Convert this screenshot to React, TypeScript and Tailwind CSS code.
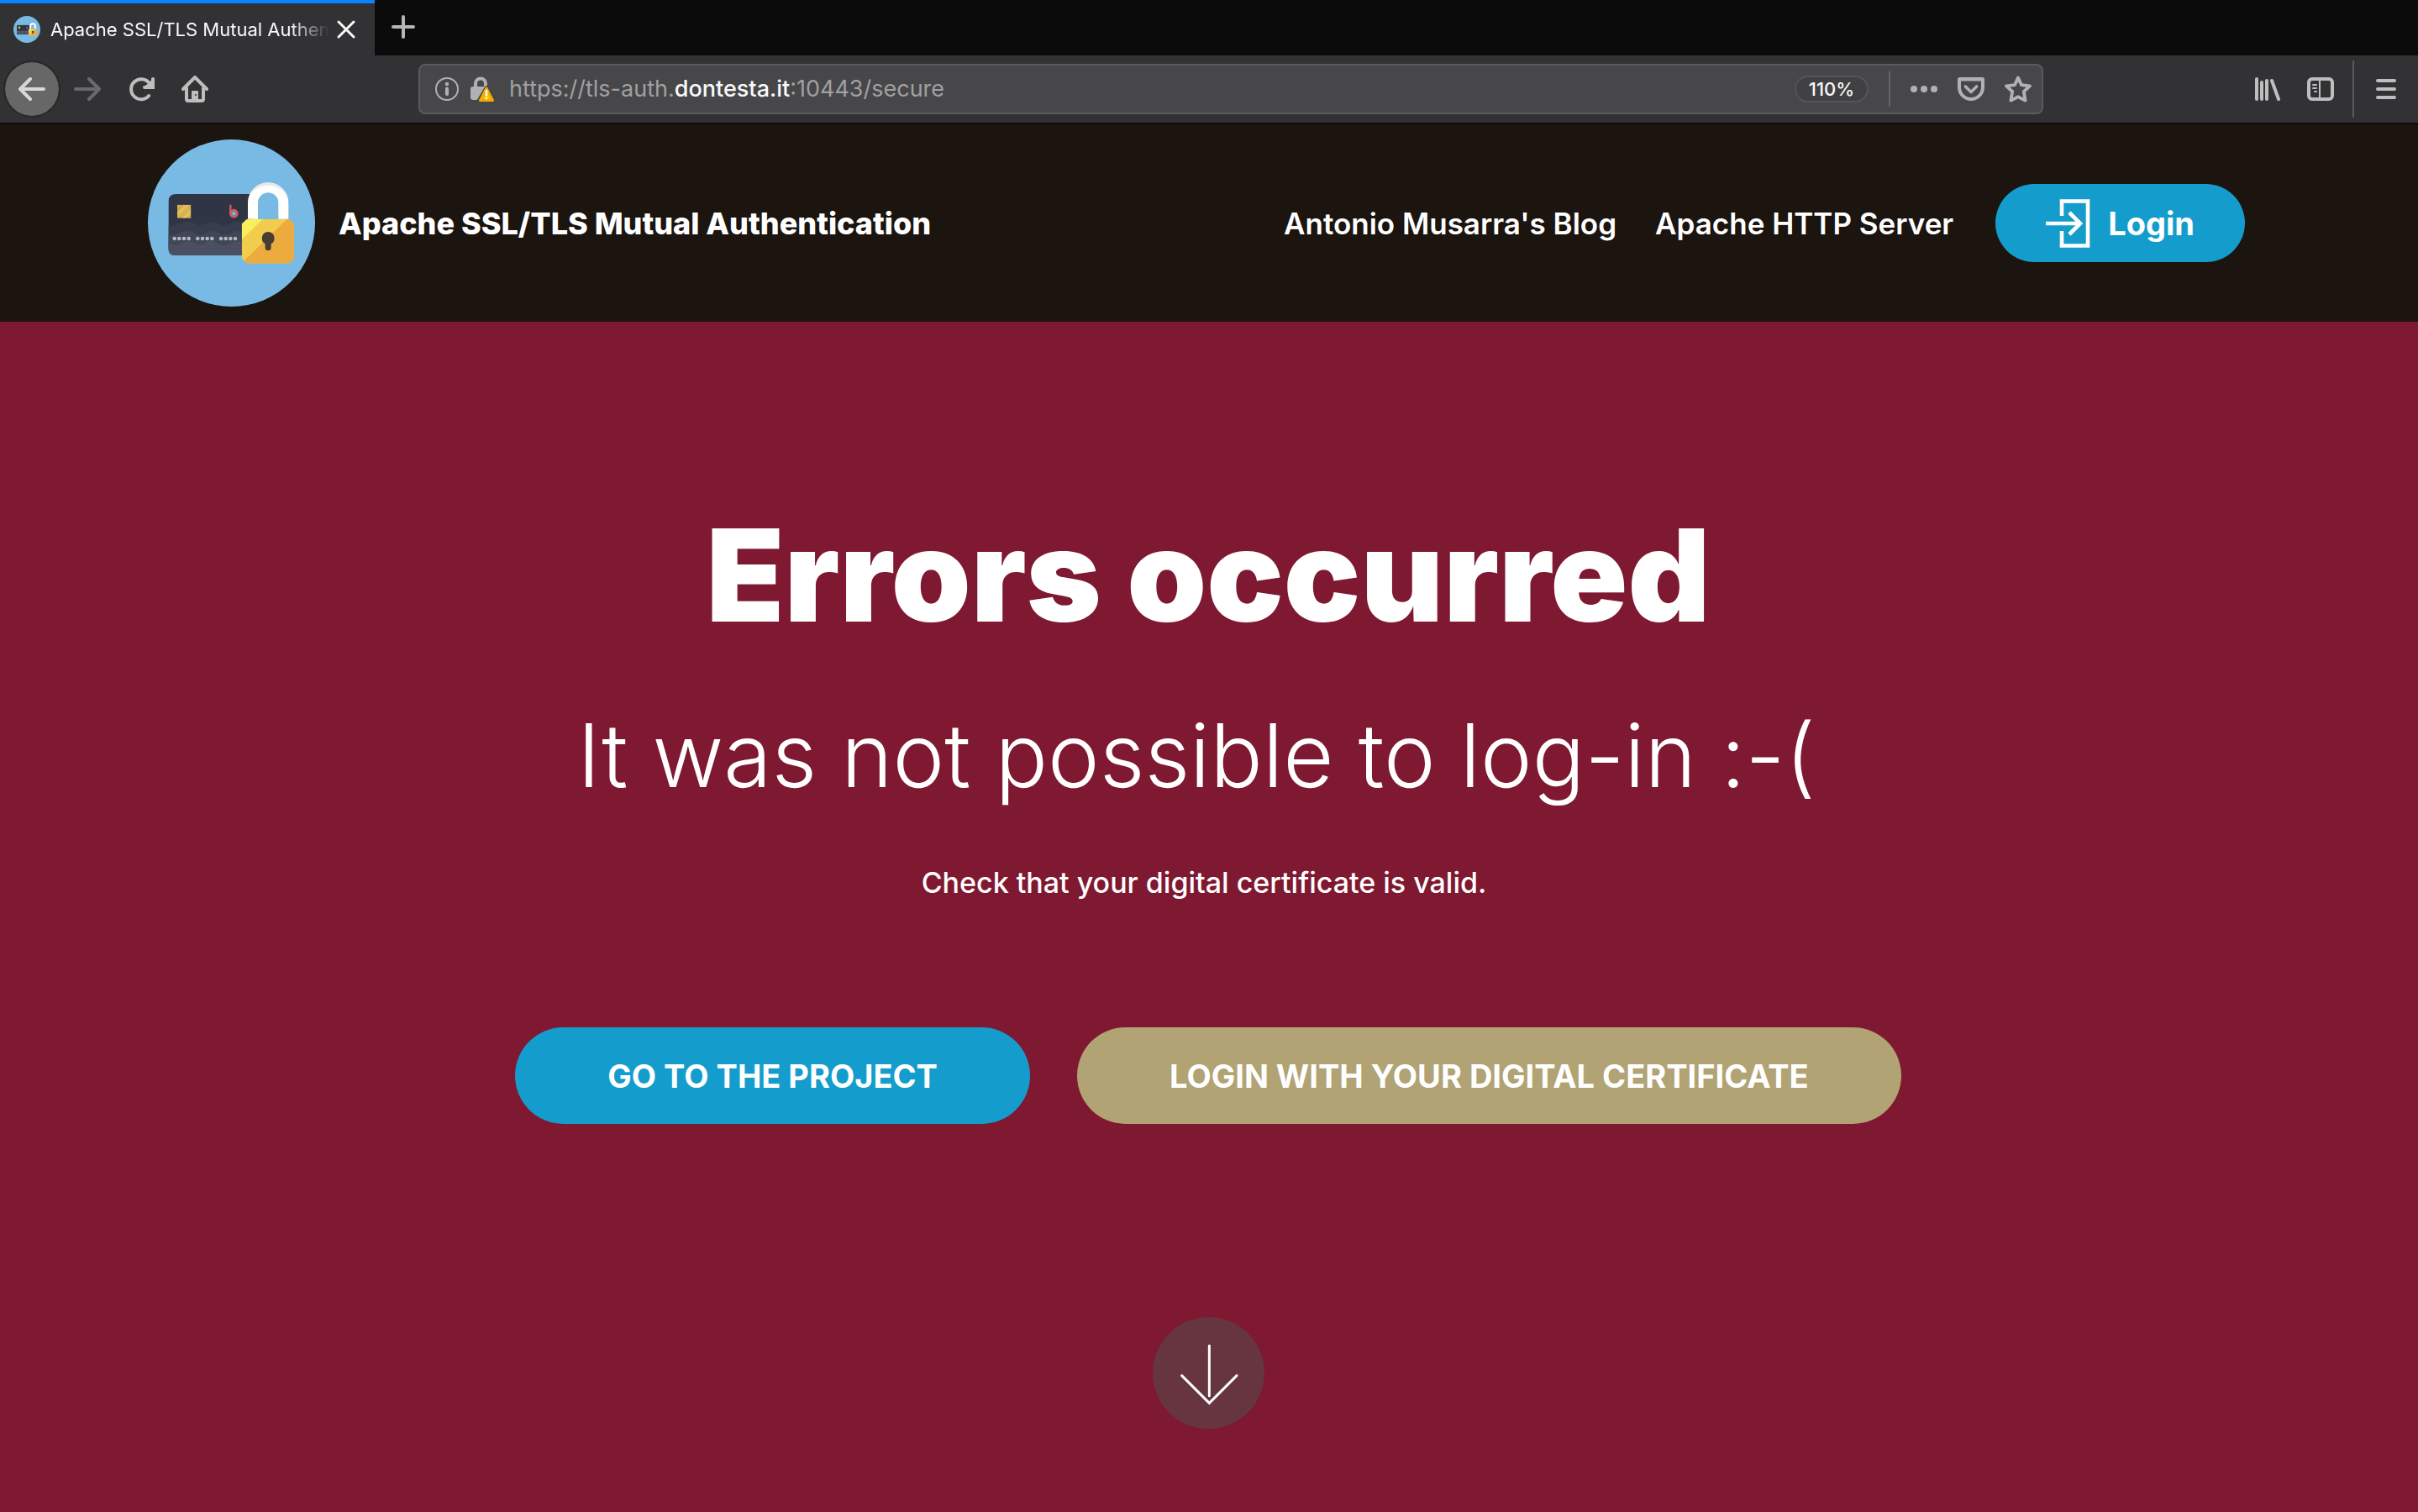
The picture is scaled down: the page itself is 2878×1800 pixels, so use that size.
import React from 'react';

type IconProps = { children: React.ReactNode; className?: string };

function Glyph({ children, className = 'text-[#bebebf]' }: IconProps) {
  return (
    <svg
      viewBox="0 0 16 16"
      aria-hidden="true"
      className={`size-8 shrink-0 ${className}`}
      fill="none"
      stroke="currentColor"
      strokeWidth="2"
      strokeLinecap="round"
      strokeLinejoin="round"
    >
      {children}
    </svg>
  );
}

function Logo({ className }: { className: string }) {
  return (
    <svg viewBox="48 48 597 597" className={className} role="img" aria-label="Card and padlock logo">
      <defs>
        <clipPath id="card">
          <path d="M149 243H418V463H149Q121 463 121 435V271Q121 243 149 243Z" />
        </clipPath>
        <clipPath id="body">
          <path d="M402 332H552L570 350V473L552 491H402L383 472V350Z" />
        </clipPath>
        <clipPath id="chip">
          <rect x="153" y="281" width="49" height="48" />
        </clipPath>
      </defs>
      <circle cx="346.5" cy="346.5" r="298.5" fill="#78bae3" />
      <g clipPath="url(#card)">
        <rect x="121" y="243" width="330" height="220" fill="#303546" />
        <path d="M121 355Q132 358 148 352Q170 340 192 341Q212 344 232 356Q252 350 272 341Q296 344 316 356Q340 352 354 342Q380 340 430 355V463H121Z" fill="#383d4d" />
        <path d="M121 387Q134 394 152 386Q172 374 192 375Q212 378 232 390Q254 386 274 375Q296 376 316 390Q340 388 360 376Q380 374 430 388V463H121Z" fill="#424757" />
        <path d="M121 416Q142 434 166 420Q190 404 214 418Q232 432 250 420Q274 402 298 420Q320 434 340 420Q364 404 430 420V463H121Z" fill="#4b5060" />
      </g>
      <g clipPath="url(#chip)">
        <rect x="153" y="281" width="49" height="48" fill="#d9b34b" />
        <path d="M153 308L182 281H196L153 322Z M170 329L202 297V312L186 329Z" fill="#dfbf68" />
        <path d="M153 297L170 281H178L153 304Z M190 329L202 316V329Z" fill="#cfa33a" />
      </g>
      <path d="M343 284V312" stroke="#d9595b" strokeWidth="7" strokeLinecap="round" />
      <circle cx="355" cy="312.500" r="12" fill="#6cc7e6" stroke="#d9595b" strokeWidth="8" />
      <circle cx="355" cy="313" r="7" fill="#66cdee" stroke="#3f5573" strokeWidth="1.500" />
      {[143, 226, 309].map((x) =>
        [0, 17, 34, 51].map((d) => <circle key={x + d} cx={x + d} cy="402" r="6.800" fill="#b5b7be" />),
      )}
      <path d="M405 332V274A72.500 72.500 0 0 1 550 274V332H514V274A36.500 36.500 0 0 0 441 274V332Z" fill="#ffffff" />
      <path d="M406 264A72.500 72.500 0 0 1 549 264A72.500 62 0 0 0 406 264Z" fill="#e6e7e8" />
      <g clipPath="url(#body)">
        <rect x="383" y="332" width="187" height="159" fill="#f2cc4c" />
        <path d="M383 332H459L383 406Z" fill="#f9ee5c" />
        <path d="M545 332H570V491H402L391 482Z" fill="#ebab3e" />
      </g>
      <path d="M477.500 378A23 23 0 0 0 467 421V434A10.500 10.500 0 0 0 488 434V421A23 23 0 0 0 477.500 378Z" fill="#463d33" />
    </svg>
  );
}

function TabStrip() {
  return (
    <div className="flex h-[66px] bg-[#0b0b0b]">
      <div className="flex w-[446px] items-center border-t-4 border-[#0a84ff] bg-[#323234] pl-4">
        <Logo className="size-8 shrink-0" />
        <span className="ml-3 w-[332px] overflow-hidden whitespace-nowrap text-[22px] leading-8 text-[#f9f9fa] mask-r-from-86%" title="Apache SSL/TLS Mutual Authentication">
          Apache SSL/TLS Mutual Authen
        </span>
        <button type="button" aria-label="Close tab" className="ml-2">
          <svg viewBox="0 0 24 24" className="size-6" stroke="#f9f9fa" strokeWidth="3" strokeLinecap="round" aria-hidden="true">
            <path d="M3 3L21 21M21 3L3 21" />
          </svg>
        </button>
      </div>
      <button type="button" aria-label="New tab" className="mb-0.5 ml-[18px]">
        <svg viewBox="0 0 32 32" className="size-8" stroke="#b6b6b6" strokeWidth="4" strokeLinecap="round" aria-hidden="true">
          <path d="M16 4V28M4 16H28" />
        </svg>
      </button>
    </div>
  );
}

function ToolButton({ label, children, className = '' }: { label: string; children: React.ReactNode; className?: string }) {
  return (
    <button type="button" aria-label={label} className={`flex size-16 shrink-0 items-center justify-center ${className}`}>
      {children}
    </button>
  );
}

function AddressBar() {
  return (
    <div className="flex h-[60px] flex-1 items-center rounded-lg border-2 border-[#5b5b5d] bg-[#474749] pr-3 pl-4">
      <button type="button" aria-label="Site information">
        <svg viewBox="0 0 32 32" className="size-8" fill="none" stroke="#b1b1b3" aria-hidden="true">
          <circle cx="16" cy="16" r="13" strokeWidth="2" />
          <path d="M16 15.500V22" strokeWidth="4" strokeLinecap="round" />
          <circle cx="16" cy="10" r="2.200" fill="#b1b1b3" stroke="none" />
        </svg>
      </button>
      <button type="button" aria-label="Connection is not secure" className="ml-[10px]">
        <svg viewBox="0 0 32 32" className="size-8" aria-hidden="true">
          <path d="M8 15V9.500A6 6 0 0 1 20 9.500V13" fill="none" stroke="#b1b1b3" strokeWidth="4" />
          <rect x="2" y="13" width="20" height="16" rx="3" fill="#b1b1b3" />
          <path d="M21 14L31 30H11.500Z" fill="#474749" stroke="#474749" strokeWidth="4" strokeLinejoin="round" />
          <path d="M21 15L28.500 29.500H13.500Z" fill="#ffbf00" stroke="#f5a800" strokeWidth="3" strokeLinejoin="round" />
          <path d="M21 18V23.500M21 27V27.200" stroke="#ffffff" strokeWidth="2.400" strokeLinecap="round" />
        </svg>
      </button>
      <div className="ml-4 flex-1 whitespace-nowrap text-[27px] leading-8 text-[#a0a0a2]">
        https://tls-auth.<span className="font-medium text-[#f9f9fa]">dontesta.it</span>:10443/secure
      </div>
      <button type="button" className="flex h-8 w-[88px] items-center justify-center rounded-full border-2 border-[#555557] bg-[#414143] text-[22px] leading-6 font-medium text-[#f9f9fa]">
        110%
      </button>
      <span className="ml-6 h-[42px] w-0.5 bg-[#5f6570]" />
      <div className="ml-6 flex items-center gap-6">
        <button type="button" aria-label="Page actions">
          <Glyph className="text-[#b1b1b3]">
            <g fill="currentColor" stroke="none">
              <circle cx="2" cy="8" r="2" />
              <circle cx="8" cy="8" r="2" />
              <circle cx="14" cy="8" r="2" />
            </g>
          </Glyph>
        </button>
        <button type="button" aria-label="Save to Pocket">
          <Glyph className="text-[#b1b1b3]">
            <path d="M1.500 2H14.500Q15 2 15 2.500V7A7 7 0 0 1 1 7V2.500Q1 2 1.500 2Z" />
            <path d="M1 2.300H15" />
            <path d="M4.700 6.500L8 9.800L11.300 6.500" strokeWidth="1.800" />
          </Glyph>
        </button>
        <button type="button" aria-label="Bookmark this page">
          <Glyph className="text-[#b1b1b3]">
            <path d="M8 1.200L10 5.600L15 6.200L11.400 9.500L12.300 14.800L8 12.600L3.700 14.800L4.600 9.500L1 6.200L6 5.600Z" strokeWidth="1.900" />
          </Glyph>
        </button>
      </div>
    </div>
  );
}

function Toolbar() {
  return (
    <div className="flex h-[82px] items-center border-b-2 border-[#0c0c0d] bg-[#323234] pl-1.5">
      <ToolButton label="Back" className="rounded-full bg-[#676767] outline-2 outline-[#29292b]">
        <Glyph className="text-[#d8d8d8]">
          <path d="M1 8H15M7 2L1 8L7 14" />
        </Glyph>
      </ToolButton>
      <ToolButton label="Forward" className="ml-0.5">
        <Glyph className="text-[#6a6a6c]">
          <path d="M1 8H15M9 2L15 8L9 14" />
        </Glyph>
      </ToolButton>
      <ToolButton label="Reload">
        <Glyph>
          <path d="M12.600 12A6 6 0 1 1 12.600 4.200" />
          <path d="M15 2V7H10" strokeLinejoin="miter" />
          <path d="M14.500 3V6.500H10.500L13 4.800Z" fill="currentColor" strokeWidth="1" />
        </Glyph>
      </ToolButton>
      <ToolButton label="Home">
        <Glyph>
          <path d="M1 8L8 1L15 8" />
          <path d="M3 7.500V14Q3 15 4 15H12Q13 15 13 14V7.500" />
          <path d="M6.500 14V9.500H9.500V14Z" fill="currentColor" strokeWidth="1" />
          <circle cx="8.500" cy="11.500" r="0.500" fill="#323234" stroke="none" />
        </Glyph>
      </ToolButton>
      <span className="w-[234px] shrink" />
      <AddressBar />
      <span className="w-[234px] shrink" />
      <ToolButton label="Library">
        <Glyph>
          <path d="M2 2V14M5 4V14M8 3V14M11 3L15 14" />
        </Glyph>
      </ToolButton>
      <ToolButton label="Sidebars">
        <Glyph>
          <rect x="1" y="2" width="14" height="12" rx="2" />
          <path d="M7.500 2.500V13.500" strokeWidth="1" />
          <path d="M3.500 5.500H5.500M3.500 7.500H5.500M4.500 9.500H5.500" strokeWidth="1" />
        </Glyph>
      </ToolButton>
      <span className="ml-1.5 h-[68px] w-0.5 bg-[#5a5a5c]" />
      <ToolButton label="Open menu" className="mr-1.5 ml-1.5">
        <Glyph>
          <path d="M3 3H13M3 8H13M3 13H13" />
        </Glyph>
      </ToolButton>
    </div>
  );
}

function SiteHeader() {
  return (
    <header className="flex items-center bg-[#1b140f] py-[18px] pr-[206px] pl-[176px] text-white">
      <a href="#home" aria-label="Home page">
        <Logo className="size-[199px]" />
      </a>
      <a href="#home" className="ml-7 text-[36px] leading-[48px] font-extrabold whitespace-nowrap">
        Apache SSL/TLS Mutual Authentication
      </a>
      <nav className="ml-auto flex items-center gap-[46px] text-[35px] leading-[48px] font-semibold whitespace-nowrap">
        <a href="#blog">Antonio Musarra's Blog</a>
        <a href="#httpd">Apache HTTP Server</a>
      </nav>
      <a href="#login" className="ml-[50px] flex h-[93px] items-center gap-5 rounded-full bg-[#149dcc] px-[60px] text-[38px] leading-[48px] font-bold">
        <svg viewBox="0 0 54 60" className="h-[60px] w-[54px]" fill="none" stroke="currentColor" strokeWidth="4.600" aria-hidden="true">
          <path d="M19 21V3.500H50V56.500H19V39" />
          <path d="M0 30H42M28 17L41 30L28 43" />
        </svg>
        Login
      </a>
    </header>
  );
}

export default function App() {
  return (
    <div className="flex min-h-screen flex-col bg-[#7f1831] font-['Inter',sans-serif]">
      <TabStrip />
      <Toolbar />
      <SiteHeader />
      <main className="flex flex-1 flex-col items-center pt-[210px] pr-0.5 pb-[96px] text-center text-white">
        <h1 className="text-[152px] leading-[184px] font-black">Errors occurred</h1>
        <h2 className="mt-[60px] pr-7 text-[104px] leading-[124px] font-light">It was not possible to log-in :-(</h2>
        <p className="mt-[62px] pr-2.5 text-[34px] leading-[56px] font-medium">Check that your digital certificate is valid.</p>
        <div className="mt-[144px] flex gap-[56px] text-[38px] leading-[48px] font-bold">
          <a href="#project" className="flex h-[115px] items-center rounded-full bg-[#149dcc] px-[110px]">
            GO TO THE PROJECT
          </a>
          <a href="#login" className="flex h-[115px] items-center rounded-full bg-[#b1a374] px-[110px]">
            LOGIN WITH YOUR DIGITAL CERTIFICATE
          </a>
        </div>
        <a href="#next" aria-label="Scroll to next section" className="mt-[230px] rounded-full bg-[#663540]">
          <svg viewBox="63 50 399 399" className="size-[133px]" fill="none" stroke="#ffffff" strokeWidth="9" strokeLinecap="round" aria-hidden="true">
            <path d="M265 152V331M167 259L265 357L363 259" />
          </svg>
        </a>
      </main>
    </div>
  );
}
